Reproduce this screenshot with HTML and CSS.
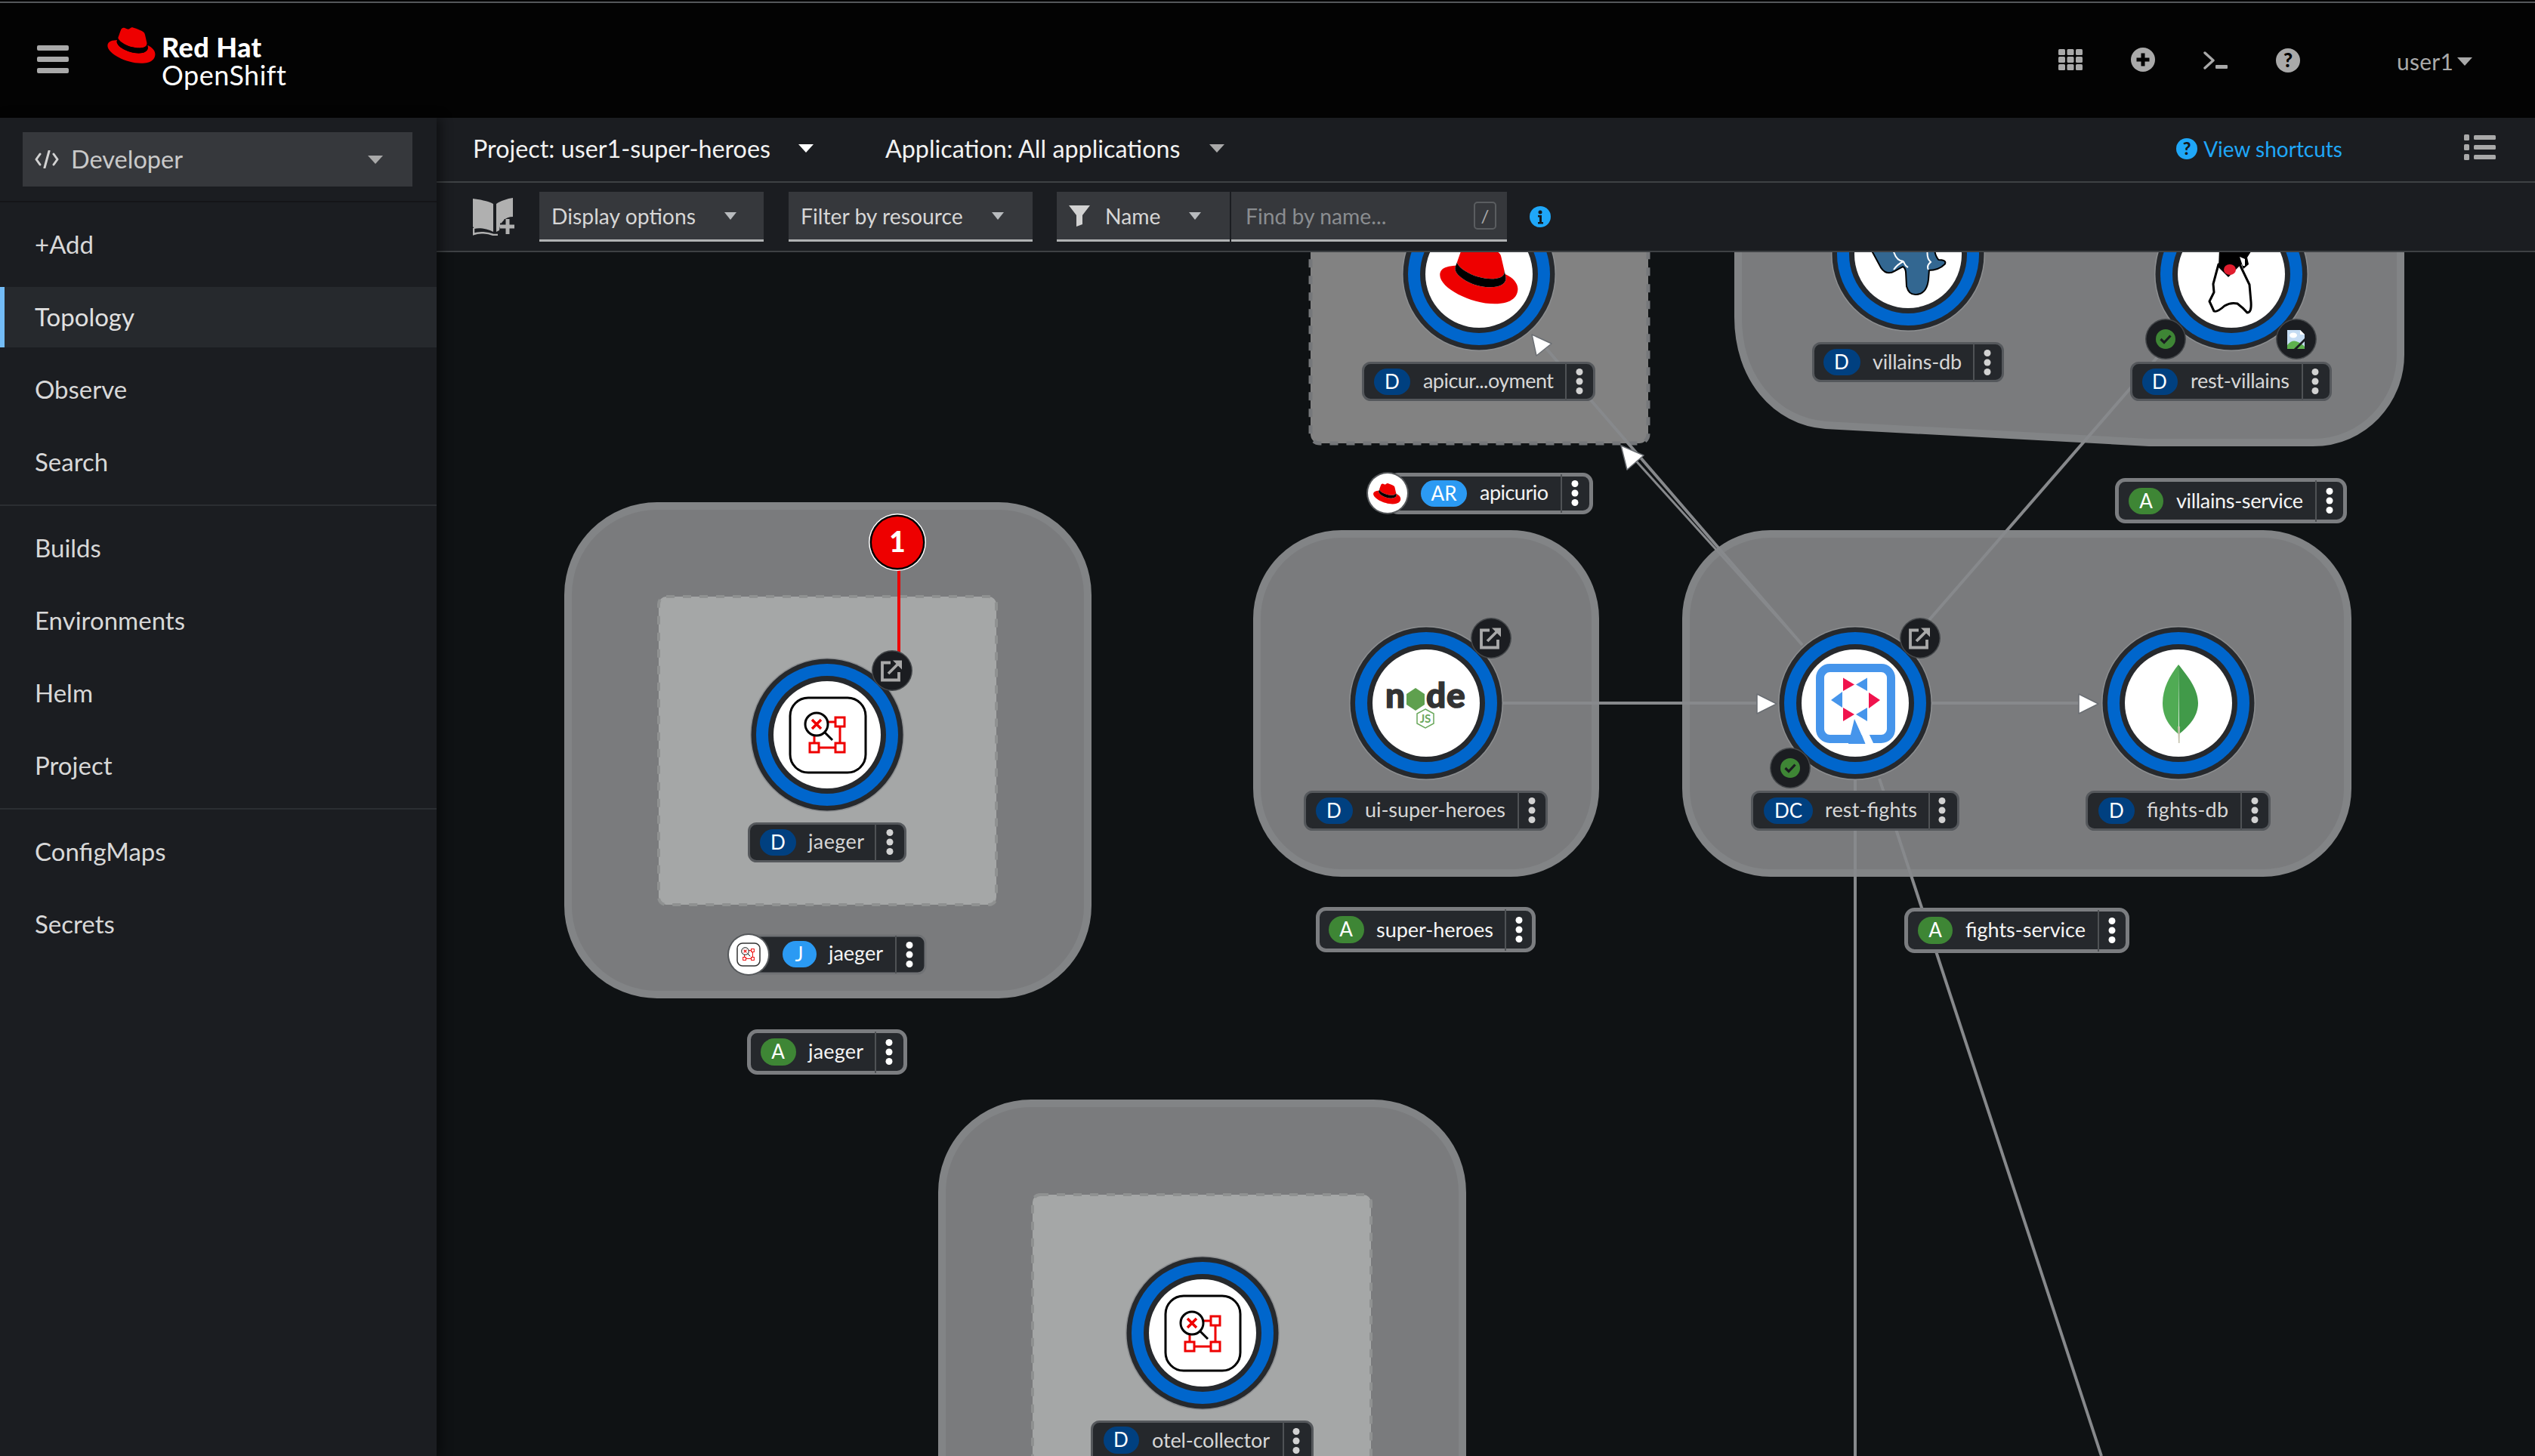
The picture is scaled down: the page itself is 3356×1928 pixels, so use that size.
FILE: index.html
```html
<!DOCTYPE html>
<html lang="en">
<head>
<meta charset="utf-8">
<title>Topology · Red Hat OpenShift</title>
<link rel="stylesheet" href="styles.css">
</head>
<body>
<div class="app">
  <header class="masthead">
    <div class="topline"></div>
    <div class="mast-row">
      <button class="burger" aria-label="Menu"><span></span><span></span><span></span></button>
      <div class="brand">
        <svg class="hat" viewBox="0 0 192 145"><use href="#hat"/></svg>
        <div class="brand-text"><div class="brand-rh">Red Hat</div><div class="brand-os">OpenShift</div></div>
      </div>
      <div class="mast-tools">
        <svg class="ic-grid" viewBox="0 0 32 28"><rect width="9" height="8" rx="1.5"/><rect x="11.5" width="9" height="8" rx="1.5"/><rect x="23" width="9" height="8" rx="1.5"/><rect y="10" width="9" height="8" rx="1.5"/><rect x="11.5" y="10" width="9" height="8" rx="1.5"/><rect x="23" y="10" width="9" height="8" rx="1.5"/><rect y="20" width="9" height="8" rx="1.5"/><rect x="11.5" y="20" width="9" height="8" rx="1.5"/><rect x="23" y="20" width="9" height="8" rx="1.5"/></svg>
        <svg class="ic-plus" viewBox="0 0 32 32"><circle cx="16" cy="16" r="16" fill="#a9a9a9"/><path d="M16 7.5v17M7.5 16h17" stroke="#000" stroke-width="5"/></svg>
        <svg class="ic-term" viewBox="0 0 32 24"><path d="M2 2l11 10L2 22" fill="none" stroke="#a9a9a9" stroke-width="3.4" stroke-linecap="round" stroke-linejoin="round"/><rect x="16" y="18" width="16" height="5" rx="1" fill="#a9a9a9"/></svg>
        <svg class="ic-help" viewBox="0 0 32 32"><circle cx="16" cy="16" r="16" fill="#a9a9a9"/><text class="ic-q" x="16" y="25" text-anchor="middle">?</text></svg>
        <div class="user">user1<span class="caret caret-user"></span></div>
      </div>
    </div>
  </header>

  <div class="body">
    <nav class="sidebar">
      <div class="persp">
        <div class="persp-btn">
          <svg class="ic-code" viewBox="0 0 32 24"><path d="M7 5L2 12l5 7M25 5l5 7-5 7M19 1l-6 22" fill="none" stroke="#d2d2d2" stroke-width="3" stroke-linecap="round" stroke-linejoin="round"/></svg>
          <span class="persp-label">Developer</span>
          <span class="caret caret-lg caret-grey"></span>
        </div>
      </div>
      <ul class="nav-group">
        <li class="nav-item">+Add</li>
        <li class="nav-item active">Topology</li>
        <li class="nav-item">Observe</li>
        <li class="nav-item">Search</li>
      </ul>
      <ul class="nav-group">
        <li class="nav-item">Builds</li>
        <li class="nav-item">Environments</li>
        <li class="nav-item">Helm</li>
        <li class="nav-item">Project</li>
      </ul>
      <ul class="nav-group last">
        <li class="nav-item">ConfigMaps</li>
        <li class="nav-item">Secrets</li>
      </ul>
    </nav>

    <main class="main">
      <div class="project-bar">
        <span class="pb-text">Project: user1-super-heroes</span>
        <span class="caret caret-lg caret-white pb-caret1"></span>
        <span class="pb-text pb-app">Application: All applications</span>
        <span class="caret caret-lg caret-grey pb-caret2"></span>
        <div class="pb-right">
          <svg class="ic-info-q" viewBox="0 0 28 28"><circle cx="14" cy="14" r="14" fill="#1fa7f8"/><text class="ic-q2" x="14" y="22" text-anchor="middle">?</text></svg>
          <span class="shortcuts">View shortcuts</span>
          <svg class="ic-list" viewBox="0 0 42 34"><rect y="0" width="7" height="8" rx="1.5"/><rect y="13" width="7" height="8" rx="1.5"/><rect y="26" width="7" height="8" rx="1.5"/><rect x="13" y="1" width="29" height="6" rx="1.5"/><rect x="13" y="14" width="29" height="6" rx="1.5"/><rect x="13" y="27" width="29" height="6" rx="1.5"/></svg>
        </div>
      </div>
      <div class="toolbar">
        <svg class="ic-book" viewBox="0 0 55 50"><path d="M0 1C8 2 20 4 27 8V45C20 41 8 39 2 41L0 38zM31 8C36 4 46 1 53 0V25C43 25 36 32 35 43L31 45z" fill="#b0b0b0"/><path d="M1 40V48C8 45 20 46 27 49H33" fill="none" stroke="#b0b0b0" stroke-width="2.500"/><path d="M46 28v20M36 38h19" stroke="#1b1d21" stroke-width="9"/><path d="M46 28v20M36 38h19" stroke="#b0b0b0" stroke-width="5"/></svg>
        <div class="tb-select tb-display"><span>Display options</span><span class="caret caret-sm"></span></div>
        <div class="tb-select tb-filter"><span>Filter by resource</span><span class="caret caret-sm"></span></div>
        <div class="tb-select tb-name">
          <svg class="ic-funnel" viewBox="0 0 28 28"><path d="M0 0h28L18 13v12l-8 3V13z" fill="#d2d2d2"/></svg>
          <span>Name</span><span class="caret caret-sm"></span>
        </div>
        <div class="tb-find"><span class="find-ph">Find by name...</span><span class="find-key">/</span></div>
        <svg class="ic-info" viewBox="0 0 28 28"><circle cx="14" cy="14" r="14" fill="#1fa7f8"/><circle cx="14" cy="8" r="2.500" fill="#14171a"/><path d="M11 12h5v9h2v2.500h-7V21h2v-6.500h-2z" fill="#14171a"/></svg>
      </div>

      <div class="canvas">
<svg class="topo" viewBox="578 334 2778 1594" width="2778" height="1594">
  <defs>
    <g id="hat">
      <path fill="#e00" d="M127.47 83.49c12.51 0 30.61-2.58 30.61-17.46a14 14 0 0 0-.31-3.42l-7.45-32.36c-1.72-7.12-3.23-10.35-15.73-16.6C124.89 8.69 103.76.5 97.51.5 91.69.5 90 8 83.06 8c-6.68 0-11.64-5.6-17.89-5.6-6 0-9.91 4.09-12.93 12.5 0 0-8.41 23.72-9.49 27.16A6.43 6.43 0 0 0 42.53 44c0 9.22 36.3 39.45 84.94 39.45M160 72.07c1.73 8.19 1.73 9.05 1.73 10.13 0 14-15.74 21.77-36.43 21.77C78.54 104 37.58 76.6 37.58 58.49a18.45 18.45 0 0 1 1.51-7.33C22.27 52 .5 55 .5 74.22c0 31.48 74.59 70.28 133.65 70.28 45.28 0 56.7-20.48 56.7-36.65 0-12.72-11-27.16-30.83-35.78"/>
      <path fill="#000" d="M160 72.07c1.73 8.19 1.73 9.05 1.73 10.13 0 14-15.74 21.77-36.43 21.77C78.54 104 37.58 76.6 37.58 58.49a18.45 18.45 0 0 1 1.51-7.33l3.66-9.06A6.75 6.75 0 0 0 42.53 44c0 9.22 36.3 39.45 84.94 39.45 12.51 0 30.61-2.58 30.61-17.46a14 14 0 0 0-.31-3.42z"/>
    </g>
    <g id="ring">
      <circle r="102" fill="#8d8f91"/>
      <circle r="100.500" fill="#26292d"/>
      <circle r="94" fill="#06c"/>
      <circle r="78" fill="#26292d"/>
      <circle r="71" fill="#fff"/>
    </g>
    <g id="jaeger-mark">
      <path class="j-red" d="M-10 -17H17V17H-17V-4"/>
      <rect class="j-sq" x="11" y="-23" width="12" height="12"/>
      <rect class="j-sq" x="11" y="11" width="12" height="12"/>
      <rect class="j-sq" x="-23" y="11" width="12" height="12"/>
      <circle class="j-lens" cx="-14" cy="-14" r="15"/>
      <path class="j-handle" d="M-3 -3L7 7"/>
      <path class="j-x" d="M-20 -20L-8 -8M-8 -20L-20 -8"/>
    </g>
    <g id="dots"><circle cy="-12.500" r="4.500"/><circle r="4.500"/><circle cy="12.500" r="4.500"/></g>
    <g id="ext">
      <circle r="27" fill="#45484b"/><circle r="25.500" fill="#1b1d21"/>
      <path d="M-2 -10.500H-13V12.500H9V2" fill="none" stroke="#a9a9a9" stroke-width="3.800"/>
      <path d="M-5 4L9 -10" fill="none" stroke="#a9a9a9" stroke-width="3.800"/>
      <path d="M1 -13.500H13V-1.500z" fill="#a9a9a9"/>
    </g>
    <g id="ok">
      <circle r="27" fill="#45484b"/><circle r="25.500" fill="#1b1d21"/>
      <circle r="13" fill="#3e8635"/>
      <path d="M-6.500 0L-2 4.500L6.500 -4.500" fill="none" stroke="#1b1d21" stroke-width="3.200"/>
    </g>
  </defs>

  <!-- application groups -->
  <rect class="grp" x="752" y="670" width="688" height="647" rx="118"/>
  <rect class="grp" x="1664" y="707" width="448" height="449" rx="112"/>
  <rect class="grp" x="2232" y="707" width="876" height="449" rx="112"/>
  <rect class="grp" x="1247" y="1461" width="689" height="700" rx="118"/>
  <path class="grp" d="M2301 300V420C2301 500 2350 558 2417 563L2845 586H3062C3130 586 3178 530 3178 470V300Z"/>

  <!-- deployment boxes -->
  <rect class="box box-light" x="872" y="790" width="447" height="408" rx="10"/>
  <rect class="box box-light" x="1367" y="1582" width="448" height="500" rx="10"/>
  <rect class="box box-mid" x="1735" y="300" width="447" height="287" rx="12"/>

  <!-- edges -->
  <path class="edge" d="M2044 458L2386 854"/>
  <path class="edge edge-thin" d="M2162 606L2386 854"/>
  <path class="edge" d="M2553 822L2856 473"/>
  <path class="edge" d="M1990 931H2327"/>
  <path class="edge" d="M2556 931H2754"/>
  <path class="edge" d="M2456 1030V1928"/>
  <path class="edge" d="M2488 1031L2782 1928"/>
  <path class="edge-red" d="M1190 750V870"/>

  <path class="arrow" d="M2028 443L2054 455L2034 471z"/>
  <path class="arrow" d="M2146 590L2176 603L2154 622z"/>
  <path class="arrow" d="M2326 919L2352 932L2326 945z"/>
  <path class="arrow" d="M2752 919L2778 932L2752 945z"/>

  <!-- nodes -->
  <use href="#ring" x="1958" y="363"/>
  <use href="#ring" x="2526" y="337"/>
  <use href="#ring" x="2954" y="363"/>
  <use href="#ring" x="1095" y="973"/>
  <use href="#ring" x="1888" y="931"/>
  <use href="#ring" x="2456" y="931"/>
  <use href="#ring" x="2884" y="931"/>
  <use href="#ring" x="1592" y="1765"/>

  <!-- node icons -->
  <use href="#hat" transform="translate(1906 324) scale(.5417)"/>

  <g class="pg">
    <path class="pg-o" d="M2478 330L2491 354Q2498 364 2508 358L2519 352Q2523 353 2524 360L2525 379Q2528 390 2537 389Q2550 388 2552 370L2553 357Q2566 357 2574 349Q2576 345 2566 345Q2561 340 2560 330Z"/>
    <path class="pg-c" d="M2506 330Q2510 346 2520 346Q2512 350 2507 357M2520 346Q2522 352 2526 354M2552 330Q2550 342 2556 347Q2550 352 2553 357"/>
  </g>

  <g class="duke">
    <path class="duke-b" d="M2937 350L2930 376L2931 387L2925 399L2931 412Q2935 414 2945 405Q2953 400 2962 402Q2970 408 2975 414Q2981 414 2980 400L2978 377L2965 350Z"/>
    <path d="M2938 330H2960L2968 349L2950 367L2937 354Z" fill="#000"/>
    <path d="M2958 330H2982L2975 341L2977 350L2970 356L2965 345L2958 338Z" fill="#000"/>
    <path d="M2965 340L2972 343L2972 352L2969 352Z" fill="#fff"/>
    <ellipse cx="2952" cy="357" rx="8" ry="7" fill="#e11d2e"/>
  </g>

  <g id="jaeger-1">
    <rect class="j-frame" x="1046" y="924" width="100" height="99" rx="24"/>
    <use href="#jaeger-mark" x="1095" y="973"/>
  </g>
  <g>
    <rect class="j-frame" x="1543" y="1716" width="99" height="99" rx="24"/>
    <use href="#jaeger-mark" x="1592" y="1766"/>
  </g>

  <g class="nodejs">
    <text class="nj" x="1834" y="937" textLength="25">n</text>
    <path d="M1874 911L1886 919V933L1874 941L1862 933V919Z" fill="#5fa04e"/>
    <text class="nj" x="1888" y="937" textLength="27">d</text>
    <text class="nj" x="1915" y="937" textLength="25">e</text>
    <path d="M1887 939L1898 945V958L1887 964L1876 958V945Z" fill="#fff" stroke="#6aa85c" stroke-width="1.500"/>
    <text class="njs" x="1887" y="957" text-anchor="middle">JS</text>
  </g>

  <g class="quarkus">
    <rect class="qk-frame" x="2409.500" y="884.500" width="94" height="94" rx="13"/>
    <path d="M2455 952L2447 985H2470Z" fill="#4695eb"/>
    <path d="M2456 952L2470 986H2481L2463 948Z" fill="#fff"/>
    <path class="qk-r" d="M2440 897.500V915L2455 906.500zM2474 917V938L2489 927zM2440 937V955L2455 946z"/>
    <path class="qk-b" d="M2472 897.500V915L2457 906.500zM2439 916V937L2424 927zM2472 937V955L2457 946z"/>
  </g>

  <g class="leaf">
    <path d="M2884 880C2872 895 2863 912 2863 931C2863 950 2873 963 2884 972Z" fill="#50ab54"/>
    <path d="M2884 880C2896 895 2910 912 2910 931C2910 950 2896 963 2885 972Z" fill="#419a49"/>
    <path d="M2883 962H2886L2885.500 984H2884Z" fill="#c4c2ac"/>
  </g>

  <!-- decorators -->
  <use href="#ok" x="2867" y="449"/>
  <g>
    <circle cx="3040" cy="449" r="27" fill="#45484b"/><circle cx="3040" cy="449" r="25.500" fill="#1b1d21"/>
    <path d="M3028 437H3045L3051 443V462H3028Z" fill="#c5dcf3"/>
    <path d="M3045 437L3051 443H3045Z" fill="#fff"/>
    <ellipse cx="3036" cy="444" rx="5" ry="3.500" fill="#fff"/>
    <path d="M3028 462V457Q3034 450 3040 452Q3047 454 3051 459V462Z" fill="#5eb14e"/>
    <path d="M3036 465L3052 449" stroke="#1b1d21" stroke-width="3"/>
  </g>
  <use href="#ext" x="1181" y="888"/>
  <use href="#ext" x="1974" y="845"/>
  <use href="#ext" x="2542" y="845"/>
  <use href="#ok" x="2370" y="1017"/>

  <!-- count badge -->
  <circle cx="1188" cy="718" r="38" fill="#fff"/>
  <circle cx="1188" cy="718" r="36.500" fill="#000"/>
  <circle cx="1188" cy="718" r="34" fill="#e00"/>
  <text class="badge-n" x="1188" y="731" text-anchor="middle">1</text>

  <!-- labels -->
  <g class="lab">
    <rect class="lb lb-n" x="991.500" y="1090.500" width="207" height="50" rx="10"/>
    <rect class="pill p-d" x="1006" y="1098" width="48" height="35" rx="17.500"/><text class="pt" x="1030" y="1125" text-anchor="middle">D</text>
    <text class="lt" x="1070" y="1124" textLength="74">jaeger</text>
    <path class="dv" d="M1159 1091V1140"/><use class="dt" href="#dots" x="1178" y="1115"/>
  </g>
  <g class="lab">
    <rect class="lb lb-s" x="980" y="1239" width="245" height="50" rx="10"/>
    <rect class="pill p-j" x="1036" y="1246" width="45" height="35" rx="17.500"/><text class="pt" x="1058" y="1273" text-anchor="middle">J</text>
    <text class="lt lt-w" x="1097" y="1272" textLength="72">jaeger</text>
    <path class="dv" d="M1186 1239V1289"/><use class="dw" href="#dots" x="1204" y="1264"/>
    <circle cx="991" cy="1264" r="28" fill="#55585b"/><circle cx="991" cy="1264" r="26" fill="#fff"/>
    <rect class="j-frame-s" x="976" y="1249" width="30" height="30" rx="7"/>
    <use href="#jaeger-mark" transform="translate(991 1264) scale(.32)"/>
  </g>
  <g class="lab">
    <rect class="lb lb-a" x="991.500" y="1365.500" width="207" height="55" rx="11"/>
    <rect class="pill p-a" x="1007" y="1375" width="47" height="36" rx="18"/><text class="pt" x="1030" y="1402" text-anchor="middle">A</text>
    <text class="lt lt-w" x="1070" y="1402" textLength="73">jaeger</text>
    <path class="dv" d="M1159 1366V1421"/><use class="dw" href="#dots" x="1177" y="1393"/>
  </g>
  <g class="lab">
    <rect class="lb lb-n" x="1804.500" y="480.500" width="306" height="49" rx="10"/>
    <rect class="pill p-d" x="1819" y="488" width="48" height="35" rx="17.500"/><text class="pt" x="1843" y="515" text-anchor="middle">D</text>
    <text class="lt" x="1884" y="514" textLength="173">apicur...oyment</text>
    <path class="dv" d="M2073 481V530"/><use class="dt" href="#dots" x="2091" y="505"/>
  </g>
  <g class="lab">
    <rect class="lb lb-a" x="1840" y="628.500" width="266.500" height="50" rx="11"/>
    <rect class="pill p-j" x="1881" y="636" width="61" height="35" rx="17.500"/><text class="pt" x="1911.500" y="663" text-anchor="middle">AR</text>
    <text class="lt lt-w" x="1959" y="662" textLength="91">apicurio</text>
    <path class="dv" d="M2067 628V679"/><use class="dw" href="#dots" x="2085" y="653"/>
    <circle cx="1837" cy="653" r="28" fill="#55585b"/><circle cx="1837" cy="653" r="26" fill="#fff"/>
    <use href="#hat" transform="translate(1818 640) scale(.19)"/>
  </g>
  <g class="lab">
    <rect class="lb lb-n" x="2400.500" y="454.500" width="251" height="50" rx="10"/>
    <rect class="pill p-d" x="2414" y="462" width="49" height="35" rx="17.500"/><text class="pt" x="2438" y="489" text-anchor="middle">D</text>
    <text class="lt" x="2479" y="489" textLength="118">villains-db</text>
    <path class="dv" d="M2613 455V505"/><use class="dt" href="#dots" x="2631" y="480"/>
  </g>
  <g class="lab">
    <rect class="lb lb-n" x="2821.500" y="480.500" width="264" height="49" rx="10"/>
    <rect class="pill p-d" x="2836" y="488" width="47" height="35" rx="17.500"/><text class="pt" x="2859" y="515" text-anchor="middle">D</text>
    <text class="lt" x="2900" y="514" textLength="131">rest-villains</text>
    <path class="dv" d="M3048 481V530"/><use class="dt" href="#dots" x="3065" y="505"/>
  </g>
  <g class="lab">
    <rect class="lb lb-a" x="2802.500" y="635.500" width="302" height="55" rx="11"/>
    <rect class="pill p-a" x="2818" y="646" width="46" height="35" rx="17.500"/><text class="pt" x="2841" y="673" text-anchor="middle">A</text>
    <text class="lt lt-w" x="2881" y="673" textLength="168">villains-service</text>
    <path class="dv" d="M3066 636V691"/><use class="dw" href="#dots" x="3084" y="663"/>
  </g>
  <g class="lab">
    <rect class="lb lb-n" x="1727.500" y="1048.500" width="320" height="50" rx="10"/>
    <rect class="pill p-d" x="1742" y="1056" width="49" height="35" rx="17.500"/><text class="pt" x="1766" y="1083" text-anchor="middle">D</text>
    <text class="lt" x="1807" y="1082" textLength="186">ui-super-heroes</text>
    <path class="dv" d="M2010 1049V1099"/><use class="dt" href="#dots" x="2028" y="1073"/>
  </g>
  <g class="lab">
    <rect class="lb lb-a" x="1744.500" y="1203.500" width="286" height="55" rx="11"/>
    <rect class="pill p-a" x="1759" y="1213" width="47" height="36" rx="18"/><text class="pt" x="1782" y="1240" text-anchor="middle">A</text>
    <text class="lt lt-w" x="1822" y="1241" textLength="155">super-heroes</text>
    <path class="dv" d="M1993 1204V1259"/><use class="dw" href="#dots" x="2011" y="1231"/>
  </g>
  <g class="lab">
    <rect class="lb lb-n" x="2319.500" y="1048.500" width="273" height="50" rx="10"/>
    <rect class="pill p-d" x="2335" y="1056" width="65" height="35" rx="17.500"/><text class="pt" x="2367.500" y="1083" text-anchor="middle">DC</text>
    <text class="lt" x="2416" y="1082" textLength="122">rest-fights</text>
    <path class="dv" d="M2554 1049V1099"/><use class="dt" href="#dots" x="2571" y="1073"/>
  </g>
  <g class="lab">
    <rect class="lb lb-n" x="2762.500" y="1048.500" width="242" height="50" rx="10"/>
    <rect class="pill p-d" x="2778" y="1056" width="48" height="35" rx="17.500"/><text class="pt" x="2802" y="1083" text-anchor="middle">D</text>
    <text class="lt" x="2842" y="1082" textLength="108">fights-db</text>
    <path class="dv" d="M2967 1049V1099"/><use class="dt" href="#dots" x="2985" y="1073"/>
  </g>
  <g class="lab">
    <rect class="lb lb-a" x="2523.500" y="1204.500" width="293" height="55" rx="11"/>
    <rect class="pill p-a" x="2539" y="1214" width="46" height="36" rx="18"/><text class="pt" x="2562" y="1241" text-anchor="middle">A</text>
    <text class="lt lt-w" x="2602" y="1241" textLength="159">fights-service</text>
    <path class="dv" d="M2778 1205V1260"/><use class="dw" href="#dots" x="2796" y="1232"/>
  </g>
  <g class="lab">
    <rect class="lb lb-n" x="1445.500" y="1882.500" width="292" height="60" rx="10"/>
    <rect class="pill p-d" x="1461" y="1889" width="47" height="36" rx="18"/><text class="pt" x="1484" y="1916" text-anchor="middle">D</text>
    <text class="lt" x="1525" y="1917" textLength="156">otel-collector</text>
    <path class="dv" d="M1699 1883V1940"/><use class="dt" href="#dots" x="1716" y="1908"/>
  </g>
</svg>
      </div>
    </main>
  </div>
</div>
</body>
</html>
```

FILE: styles.css
```css
* { box-sizing: border-box; }
html, body { margin: 0; height: 100%; background: #0f1214; overflow: hidden; }
body { font-family: "Lato", "Liberation Sans", sans-serif; color: #e0e0e0; }
.app { width: 3356px; height: 1928px; display: flex; flex-direction: column; }

/* masthead */
.masthead { height: 156px; background: #030303; flex: none; padding-top: 2px; display: flex; flex-direction: column; }
.topline { height: 2px; background: #54575a; flex: none; }
.mast-row { flex: 1; display: flex; align-items: center; padding-left: 49px; }
.burger { width: 42px; height: 37px; padding: 0; border: 0; background: none; display: flex; flex-direction: column; justify-content: space-between; margin-top: -4px; }
.burger span { display: block; height: 7px; border-radius: 2px; background: #a9a9a9; }
.brand { display: flex; align-items: flex-start; margin-left: 51px; margin-top: -3px; }
.hat { width: 64px; height: 48px; margin-top: -3px; }
.brand-text { margin-left: 8px; margin-top: 5px; color: #fff; }
.brand-rh { font-weight: 900; font-size: 36px; line-height: 36px; letter-spacing: .4px; }
.brand-os { font-size: 36px; line-height: 38px; letter-spacing: .5px; }
.mast-tools { margin-left: auto; display: flex; align-items: center; padding-right: 83px; margin-top: 2px; }
.ic-grid { width: 32px; height: 28px; fill: #a9a9a9; margin-top: -4px; }
.ic-plus { width: 32px; height: 32px; margin-left: 64px; margin-top: -4px; }
.ic-term { width: 32px; height: 24px; margin-left: 64px; margin-top: -2px; }
.ic-help { width: 32px; height: 32px; margin-left: 64px; margin-top: -2px; }
.ic-q { font: 900 26px "Lato", sans-serif; fill: #000; }
.user { margin-left: 128px; font-size: 30px; color: #a9a9a9; display: flex; align-items: center; letter-spacing: .2px; }
.caret { display: inline-block; width: 0; height: 0; border-style: solid; border-color: #b8bbbe transparent transparent; border-width: 10px 8px 0; }
.caret-user { margin-left: 5px; border-width: 11px 10px 0; border-top-color: #a9a9a9; }
.caret-lg { border-width: 11px 10px 0; }
.caret-grey { border-top-color: #a9a9a9; }
.caret-white { border-top-color: #fff; }

/* body */
.body { flex: 1; display: flex; min-height: 0; }
.sidebar { width: 578px; flex: none; background: #1b1d21; box-shadow: 6px 0 14px rgba(0,0,0,.45); z-index: 2; display: flex; flex-direction: column; }
.persp { height: 112px; padding: 19px 32px 0 30px; border-bottom: 2px solid #141518; }
.persp-btn { height: 72px; background: #36383c; display: flex; align-items: center; padding: 0 39px 0 16px; }
.ic-code { width: 32px; height: 24px; }
.persp-label { margin-left: 16px; font-size: 32.500px; color: #c9c9c9; flex: 1; padding-bottom: 2px; }
.nav-group { list-style: none; margin: 0; padding: 16px 0 0; border-bottom: 2px solid #2b2e32; }
.nav-group.last { border-bottom: 0; }
.nav-item { height: 80px; margin-bottom: 16px; padding: 0 0 3px 46px; display: flex; align-items: center; font-size: 33px; color: #d8d8d8; }
.nav-item.active { background: #26292d; box-shadow: inset 6px 0 0 #73bcf7; color: #e0e0e0; }

/* project bar */
.main { flex: 1; display: flex; flex-direction: column; min-width: 0; }
.project-bar { height: 86px; flex: none; background: #1b1d21; border-bottom: 2px solid #3e4144; display: flex; align-items: center; padding: 0 0 3px 48px; }
.pb-text { font-size: 32.300px; color: #f2f2f2; }
.pb-caret1 { margin-left: 37px; }
.pb-app { margin-left: 95px; }
.pb-caret2 { margin-left: 38px; }
.pb-right { margin-left: auto; display: flex; align-items: center; padding-right: 52px; }
.ic-info-q { width: 28px; height: 28px; }
.ic-q2 { font: 900 23px "Lato", sans-serif; fill: #14171a; }
.shortcuts { margin-left: 8px; font-size: 28px; color: #1fa7f8; }
.ic-list { width: 42px; height: 34px; fill: #a9a9a9; margin-left: 161px; margin-top: -4px; }

/* toolbar */
.toolbar { height: 92px; flex: none; background: #1b1d21; border-bottom: 2px solid #3e4144; display: flex; align-items: flex-start; padding: 12px 0 0 48px; }
.ic-book { width: 55px; height: 50px; margin-top: 8px; }
.tb-select, .tb-find { height: 66px; background: #36383c; border-bottom: 3px solid #b0b2b3; display: flex; align-items: center; font-size: 28.300px; color: #d6d6d6; padding-left: 16px; }
.tb-display { width: 297px; margin-left: 33px; justify-content: space-between; padding-right: 36px; }
.tb-filter { width: 323px; margin-left: 33px; justify-content: space-between; padding-right: 38px; }
.tb-name { width: 229px; margin-left: 32px; padding-right: 38px; }
.tb-name span:first-of-type { margin-left: 20px; }
.tb-name .caret { margin-left: auto; }
.ic-funnel { width: 28px; height: 28px; }
.tb-find { width: 365px; margin-left: 2px; padding-left: 19px; padding-right: 14px; justify-content: space-between; color: #8a8d90; }
.find-key { width: 30px; height: 37px; border: 2px solid #5a5d60; border-radius: 5px; color: #a9a9a9; font-size: 24px; display: flex; align-items: center; justify-content: center; }
.ic-info { width: 28px; height: 28px; margin: 19px 0 0 30px; }

/* canvas */
.canvas { flex: 1; min-height: 0; background: #0f1214; overflow: hidden; }
.topo { display: block; }
.grp { fill: #7a7b7d; stroke: #828486; stroke-width: 10; }
.box { stroke-width: 4; stroke-dasharray: 11 11; }
.box-light { fill: #a5a7a7; stroke: #8f9191; }
.box-mid { fill: #828282; stroke: #75777a; stroke-width: 5; }
.edge { fill: none; stroke: #87898c; stroke-width: 4; }
.edge-thin { stroke-width: 3; }
.edge-red { fill: none; stroke: #e00; stroke-width: 4; }
.arrow { fill: #fff; stroke: #6a6e73; stroke-width: 1.500; stroke-linejoin: round; }
.j-frame { fill: #fff; stroke: #000; stroke-width: 3; }
.j-frame-s { fill: #fff; stroke: #333; stroke-width: 1.500; }
.j-red { fill: none; stroke: #e00; stroke-width: 3; }
.j-sq { fill: #fff; stroke: #e00; stroke-width: 3; }
.j-lens { fill: #fff; stroke: #000; stroke-width: 3; }
.j-handle { fill: none; stroke: #000; stroke-width: 3; }
.j-x { fill: none; stroke: #e00; stroke-width: 3.500; }
.pg-o { fill: #336791; stroke: #000; stroke-width: 4; stroke-linejoin: round; paint-order: stroke; }
.pg-c { fill: none; stroke: #fff; stroke-width: 2; }
.duke-b { fill: #fff; stroke: #000; stroke-width: 3; stroke-linejoin: round; }
.nj { font: 900 46px "Lato", sans-serif; fill: #333; stroke: #333; stroke-width: 1.500; }
.njs { font: 700 15px "Lato", sans-serif; fill: #6aa85c; }
.qk-frame { fill: #fff; stroke: #4695eb; stroke-width: 11; }
.qk-r { fill: #f0134d; }
.qk-b { fill: #4695eb; }
.badge-n { font: 900 37px "Lato", sans-serif; fill: #fff; }
.lb { fill: #25282c; }
.lb-n { stroke: #55585c; stroke-width: 3; }
.lb-s { stroke: #6f7174; stroke-width: 3; }
.lb-a { stroke: #7b7d80; stroke-width: 5; }
.p-d { fill: #004080; }
.p-j { fill: #2b9af3; }
.p-a { fill: #3e8635; }
.pt { font: 400 26px "Lato", sans-serif; fill: #fff; }
.lt { font: 400 27px "Lato", sans-serif; fill: #d6d6d6; }
.lt-w { fill: #f4f4f4; }
.dv { stroke: #4f5255; stroke-width: 2; fill: none; }
.dt { fill: #d2d2d2; }
.dw { fill: #fff; }
```
